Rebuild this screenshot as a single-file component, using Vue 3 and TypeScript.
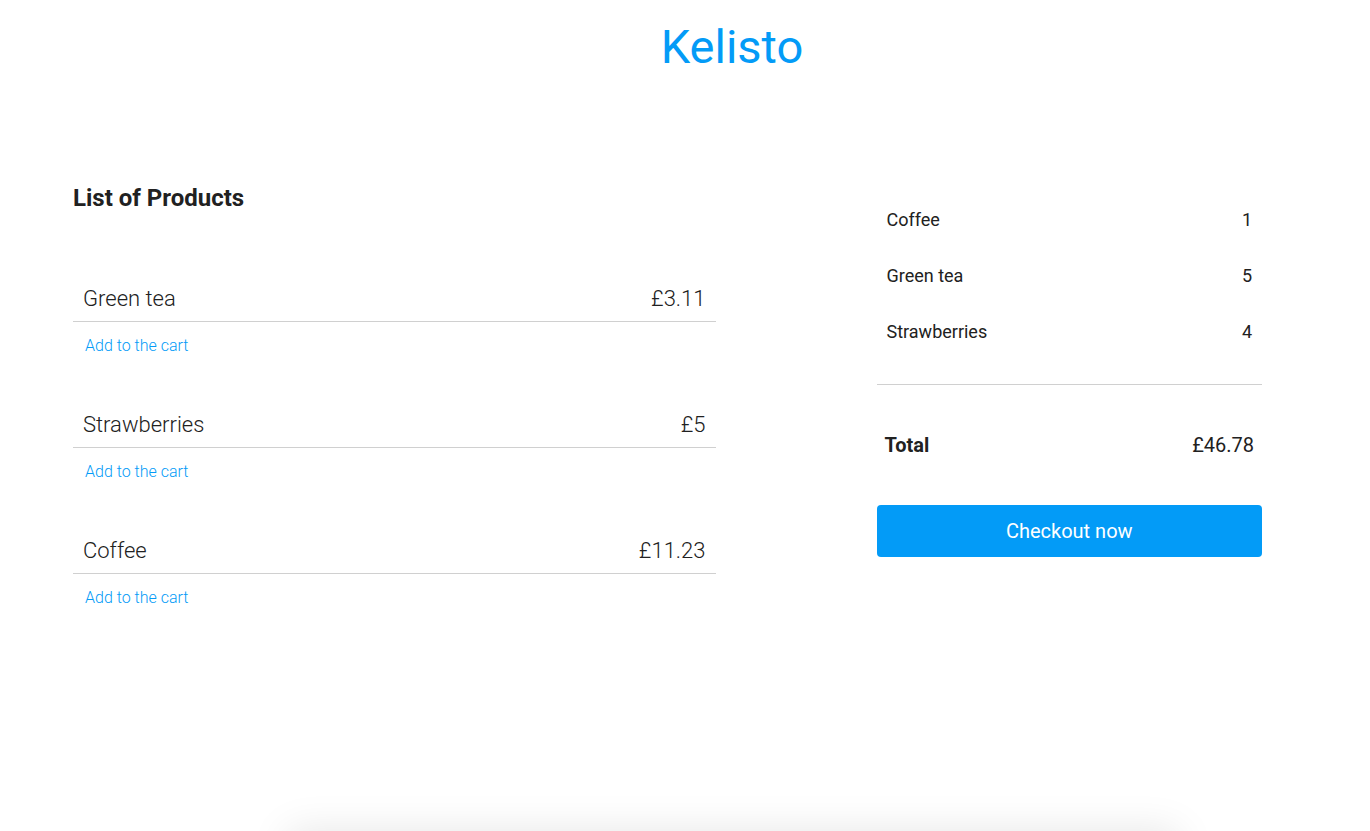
<script setup lang="ts">
interface Product {
  name: string
  price: string
}
interface CartLine {
  name: string
  quantity: number
}

const products: Product[] = [
  { name: 'Green tea', price: '£3.11' },
  { name: 'Strawberries', price: '£5' },
  { name: 'Coffee', price: '£11.23' },
]
const cart: CartLine[] = [
  { name: 'Coffee', quantity: 1 },
  { name: 'Green tea', quantity: 5 },
  { name: 'Strawberries', quantity: 4 },
]
const total = '£46.78'
</script>

<template>
  <div class="page">
    <header class="header">
      <h1 class="brand">Kelisto</h1>
    </header>
    <main class="content">
      <section class="products">
        <h2 class="heading">List of Products</h2>
        <ul class="product-list">
          <li v-for="product in products" :key="product.name" class="product">
            <div class="product-row">
              <span>{{ product.name }}</span>
              <span>{{ product.price }}</span>
            </div>
            <button type="button" class="add">Add to the cart</button>
          </li>
        </ul>
      </section>
      <aside class="cart">
        <ul class="cart-list">
          <li v-for="line in cart" :key="line.name" class="cart-row">
            <span>{{ line.name }}</span>
            <span>{{ line.quantity }}</span>
          </li>
        </ul>
        <div class="total">
          <strong>Total</strong>
          <span>{{ total }}</span>
        </div>
        <button type="button" class="checkout">Checkout now</button>
      </aside>
    </main>
    <div class="bottom-shade"></div>
  </div>
</template>

<style>
body {
  margin: 0;
  background: #fff;
}
</style>

<style scoped>
.page {
  position: relative;
  min-height: 100vh;
  overflow: hidden;
  color: #212121;
  font-family: Roboto, "Liberation Sans", sans-serif;
}
.header {
  padding: 15px 0 0 94px;
  text-align: center;
}
.brand {
  margin: 0;
  color: #039bf7;
  font-size: 47px;
  font-weight: 400;
  line-height: 64px;
}
.content {
  display: grid;
  grid-template-columns: 5fr 3fr;
  column-gap: 161px;
  padding: 101px 108px 0 73px;
}
.heading {
  margin: 0;
  font-size: 24px;
  font-weight: 700;
  line-height: 36px;
}
.product-list,
.cart-list {
  margin: 0;
  padding: 0;
  list-style: none;
}
.product-list {
  padding-top: 60px;
}
.product {
  min-height: 126px;
}
.product-row {
  display: flex;
  justify-content: space-between;
  padding: 7px 10px 6px;
  border-bottom: 1px solid #d0d0d0;
  font-size: 22px;
  font-weight: 350;
  line-height: 32px;
}
.add {
  margin: 12px 0 0 12px;
  padding: 0;
  border: 0;
  background: none;
  color: #039bf7;
  font: inherit;
  font-size: 16px;
  font-weight: 350;
  line-height: 24px;
  cursor: pointer;
}
.cart {
  padding-top: 12px;
}
.cart-list {
  padding-bottom: 24px;
  border-bottom: 1px solid #d0d0d0;
}
.cart-row {
  display: flex;
  justify-content: space-between;
  padding: 16px 10px;
  font-size: 18px;
  line-height: 24px;
}
.total {
  display: flex;
  justify-content: space-between;
  padding: 44px 8px;
  font-size: 20px;
  line-height: 32px;
}
.checkout {
  display: block;
  width: 100%;
  height: 52px;
  padding: 0;
  border: 0;
  border-radius: 4px;
  background: #039bf7;
  color: #fff;
  font: inherit;
  font-size: 20px;
  cursor: pointer;
}
.bottom-shade {
  position: absolute;
  top: 100%;
  left: 21%;
  right: 14%;
  height: 60px;
  box-shadow: 0 0 40px rgba(0, 0, 0, 0.1);
}
</style>
